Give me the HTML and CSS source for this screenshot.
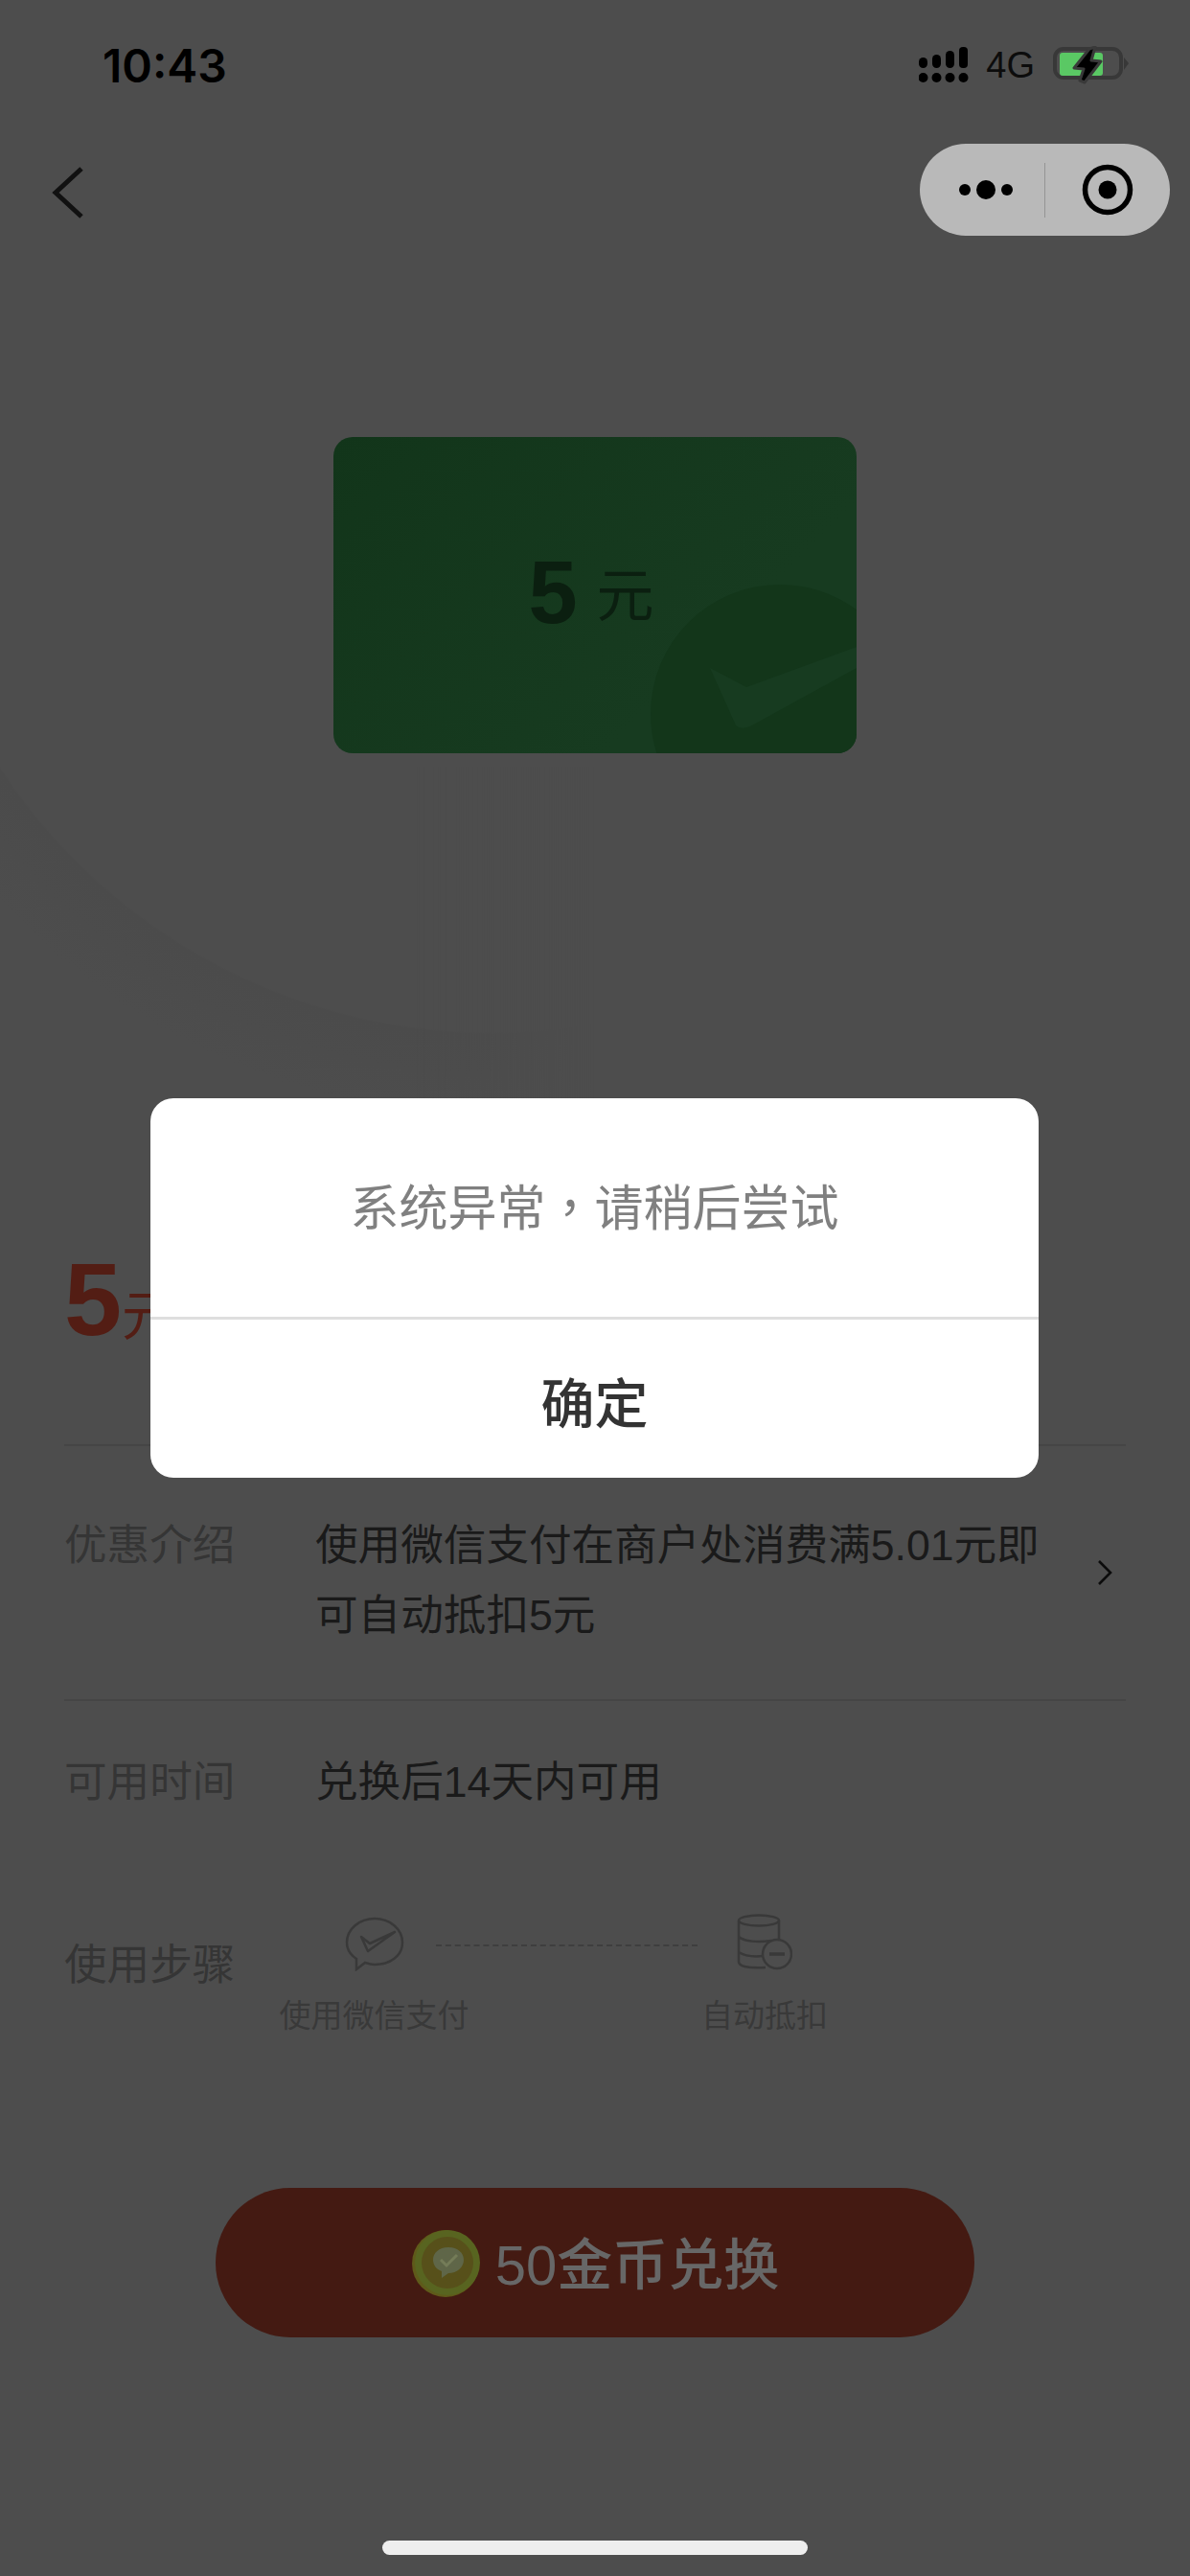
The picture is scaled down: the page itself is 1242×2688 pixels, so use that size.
FILE: index.html
```html
<!DOCTYPE html>
<html lang="zh-CN">
<head>
    <meta charset="UTF-8">
    <meta name="viewport" content="width=device-width, initial-scale=1.0">
    <title>5元代金券</title>
    <link rel="stylesheet" href="styles.css">
</head>
<body>
    <div class="page">
        <div class="status-bar">
            <span class="time">10:43</span>
            <div class="status-icons">
                <svg class="signal" width="52" height="38" viewBox="0 0 52 38">
                    <rect x="0" y="11" width="9" height="11" rx="4.5"/>
                    <rect x="14" y="8" width="9" height="14" rx="4.5"/>
                    <rect x="28" y="4" width="9" height="18" rx="4.5"/>
                    <rect x="42" y="0" width="9" height="22" rx="4"/>
                    <circle cx="4.5" cy="32" r="5"/>
                    <circle cx="18.5" cy="32" r="5"/>
                    <circle cx="32.5" cy="32" r="5"/>
                    <circle cx="46.5" cy="32" r="5"/>
                </svg>
                <span class="network">4G</span>
                <svg class="battery" width="80" height="40" viewBox="0 0 80 40">
                    <rect x="2" y="3" width="69" height="30" rx="9" fill="none" stroke="#383838" stroke-width="4"/>
                    <rect x="7" y="7" width="45" height="24" rx="3" fill="#5ac864"/>
                    <path d="M74 12 L79 18 L74 25 Z" fill="#383838"/>
                    <path d="M38 3 L44 1 L40 15 L50 16 L33 38 L28 36 L32 24 L22 23 Z" fill="#000" stroke="#393939" stroke-width="3" stroke-linejoin="round"/>
                </svg>
            </div>
        </div>

        <div class="nav-bar">
            <svg class="back" width="34" height="56" viewBox="0 0 34 56">
                <path d="M31 3 L4 28 L31 53" fill="none" stroke="#111" stroke-width="5"/>
            </svg>
            <div class="capsule">
                <div class="capsule-part">
                    <svg class="capsule-dots" width="58" height="24" viewBox="0 0 58 24">
                        <circle cx="7" cy="12" r="6"/>
                        <circle cx="29" cy="12" r="10"/>
                        <circle cx="51" cy="12" r="6"/>
                    </svg>
                </div>
                <div class="capsule-line"></div>
                <div class="capsule-part">
                    <svg width="54" height="54" viewBox="0 0 54 54">
                        <circle cx="27" cy="27" r="23.5" fill="none" stroke="#000" stroke-width="5.5"/>
                        <circle cx="27" cy="27" r="9.5"/>
                    </svg>
                </div>
            </div>
        </div>

        <div class="coupon-card">
            <svg class="coupon-mark" width="546" height="330" viewBox="0 0 546 330">
                <circle cx="466" cy="289" r="135" fill="#13361a"/>
                <path d="M393 241 L431 261 L546 219 L546 241 L435 302 Q425 306 420 301 Z" fill="#173b20"/>
            </svg>
            <div class="coupon-value"><span class="coupon-num">5</span><span class="coupon-unit">元</span></div>
        </div>

        <div class="amount"><span class="amount-num">5</span><span class="amount-unit">元</span></div>

        <div class="info-row first-row">
            <div class="info-label">优惠介绍</div>
            <div class="info-value">使用微信支付在商户处消费满5.01元即可自动抵扣5元</div>
            <svg class="info-arrow" width="16" height="26" viewBox="0 0 16 26">
                <path d="M2 1 L14 13 L2 25" fill="none" stroke="#0c0c0c" stroke-width="2.6"/>
            </svg>
        </div>
        <div class="info-row time-row">
            <div class="info-label">可用时间</div>
            <div class="info-value">兑换后14天内可用</div>
        </div>
        <div class="steps-row">
            <div class="info-label steps-label">使用步骤</div>
            <div class="step step-pay">
                <svg width="62" height="60" viewBox="0 0 62 60">
                    <path d="M31 5 C47 5 60 16 60 30 C60 44 47 53 31 53 C27 53 24 52 21 51 L12 58 L12 47 C6 43 2 37 2 30 C2 16 15 5 31 5 Z" fill="none" stroke="#393939" stroke-width="2.5"/>
                    <path d="M17 24 L24 39 L52 19 L26 31 L17 24 Z" fill="none" stroke="#393939" stroke-width="2.5" stroke-linejoin="round"/>
                </svg>
                <div class="step-text">使用微信支付</div>
            </div>
            <div class="step-line"></div>
            <div class="step step-auto">
                <svg width="58" height="60" viewBox="0 0 58 60">
                    <ellipse cx="23" cy="7" rx="21" ry="5.5" fill="none" stroke="#393939" stroke-width="2.5"/>
                    <path d="M2 7 V50 C2 55 12 57 30 56 M44 7 V27 M2 24 C8 29 22 30 36 28 M2 40 C8 44 18 45 28 44" fill="none" stroke="#393939" stroke-width="2.5"/>
                    <circle cx="42" cy="42" r="15" fill="#4d4d4d" stroke="#393939" stroke-width="2.5"/>
                    <path d="M34 42 H50" stroke="#393939" stroke-width="3.5"/>
                </svg>
                <div class="step-text">自动抵扣</div>
            </div>
        </div>

        <div class="exchange-btn">
            <svg width="74" height="72" viewBox="0 0 74 72">
                <circle cx="36" cy="37" r="35" fill="#5f5a1a"/>
                <circle cx="38" cy="36" r="34" fill="#586420"/>
                <circle cx="38" cy="36" r="27" fill="#57501a"/>
                <path d="M39 20 C49 20 55 26 55 33 C55 41 48 47 39 47 L32 52 L32 45 C26 43 23 38 23 33 C23 26 29 20 39 20 Z" fill="#5f6648"/>
                <path d="M31 33 L37 39 L48 28" fill="none" stroke="#747c58" stroke-width="3"/>
            </svg>
            <span class="exchange-text">50金币兑换</span>
        </div>

        <div class="home-bar"></div>

        <div class="dialog">
            <div class="dialog-msg">系统异常<span class="comma">，</span>请稍后尝试</div>
            <div class="dialog-btn">确定</div>
        </div>
    </div>
</body>
</html>
```

FILE: styles.css
```css
body {
    margin: 0;
    padding: 0;
    background-color: #4d4d4d;
    font-family: "Liberation Sans", "Noto Sans CJK SC", sans-serif;
}
.page {
    position: relative;
    width: 1242px;
    height: 2688px;
    overflow: hidden;
    background-color: #4d4d4d;
}
/* faint arc behind the page, lower left only */
.page::before {
    content: "";
    position: absolute;
    left: 0;
    top: 800px;
    width: 620px;
    height: 400px;
    background: radial-gradient(circle at 513px -336px, #4d4d4d 613px, #4b4b4b 615px, #4d4d4d 700px);
    -webkit-mask-image: linear-gradient(to right, #000 70%, transparent);
    mask-image: linear-gradient(to right, #000 70%, transparent);
}

/* status bar */
.status-bar {
    display: flex;
    justify-content: space-between;
    align-items: center;
    height: 136px;
    padding: 0 63px 0 107px;
}
.time {
    font-family: Inter, sans-serif;
    font-size: 48px;
    font-weight: 600;
    color: #000;
}
.status-icons {
    display: flex;
    align-items: center;
}
.signal {
    fill: #000;
}
.network {
    margin-left: 18px;
    margin-right: 19px;
    font-size: 38px;
    color: #0c0c0c;
}

/* nav */
.nav-bar {
    display: flex;
    justify-content: space-between;
    align-items: center;
    height: 96px;
    margin-top: 14px;
    padding: 0 21px 0 54px;
}
.back {
    margin-top: 6px;
}
.capsule {
    display: flex;
    align-items: center;
    width: 261px;
    height: 96px;
    border-radius: 48px;
    background-color: #b9b9b9;
}
.capsule-part {
    display: flex;
    justify-content: center;
    align-items: center;
    flex: 1;
}
.capsule-dots {
    margin-left: 8px;
}
.capsule-line {
    width: 1px;
    height: 57px;
    background-color: #949494;
}

/* coupon card */
.coupon-card {
    position: relative;
    display: flex;
    justify-content: center;
    align-items: center;
    width: 546px;
    height: 330px;
    margin: 210px auto 0;
    border-radius: 20px;
    overflow: hidden;
    background: linear-gradient(135deg, #12351a, #173b20 70%);
}
.coupon-mark {
    position: absolute;
    left: 0;
    top: 0;
}
.coupon-value {
    position: relative;
    display: flex;
    align-items: center;
    margin-right: 8px;
    margin-top: -6px;
    color: #0b1f10;
}
.coupon-num {
    font-size: 92px;
    font-weight: 700;
    line-height: 100px;
}
.coupon-unit {
    margin-left: 20px;
    padding-top: 10px;
    font-size: 60px;
    line-height: 100px;
}

/* amount */
.amount {
    display: flex;
    align-items: baseline;
    height: 108px;
    margin: 516px 67px 0;
    padding-bottom: 97px;
    border-bottom: 2px solid #454545;
    color: #531d14;
}
.amount-num {
    font-size: 108px;
    font-weight: 700;
    line-height: 108px;
}
.amount-unit {
    font-size: 56px;
    line-height: 108px;
}

/* info rows */
.info-row {
    display: flex;
    margin: 0 67px;
    font-size: 44.6px;
    line-height: 73px;
}
.info-label {
    flex: none;
    width: 262px;
    color: #353535;
}
.info-value {
    width: 770px;
    color: #1a1a1a;
}
.first-row {
    padding: 67px 0 51px;
    border-bottom: 2px solid #454545;
}
.info-arrow {
    align-self: center;
    margin-bottom: 16px;
    margin-left: 46px;
}
.time-row {
    padding-top: 48px;
    padding-bottom: 118px;
}
.steps-row {
    display: flex;
    height: 125px;
    margin: 0 67px;
    margin-top: -14px;
    font-size: 44.6px;
    line-height: 73px;
}
.steps-label {
    width: 225px;
    padding-top: 14px;
}
.step {
    display: flex;
    flex-direction: column;
    align-items: center;
    flex: none;
}
.step svg {
    display: block;
    margin-top: -3px;
}
.step-pay {
    width: 197px;
}
.step-auto {
    width: 126px;
    margin-left: 7px;
}
.step-text {
    margin-top: 27px;
    font-size: 33px;
    line-height: 40px;
    white-space: nowrap;
    color: #393939;
}
.step-line {
    flex: none;
    width: 273px;
    height: 0;
    margin: 29px 0 0 -34px;
    border-top: 2px dashed #3e3e3e;
}

/* exchange button */
.exchange-btn {
    display: flex;
    justify-content: center;
    align-items: center;
    gap: 14px;
    width: 792px;
    height: 156px;
    margin: 158px auto 0;
    border-radius: 78px;
    background-color: #441a12;
}
.exchange-text {
    margin-bottom: 4px;
    font-size: 58px;
    font-weight: 500;
    color: #676767;
}

.home-bar {
    width: 444px;
    height: 15px;
    margin: 212px auto 0;
    border-radius: 8px;
    background-color: #eee;
}

/* dialog sits over the page */
.dialog {
    position: absolute;
    left: 157px;
    top: 1146px;
    width: 927px;
    height: 396px;
    border-radius: 24px;
    background-color: #fff;
}
.dialog-msg {
    display: flex;
    justify-content: center;
    align-items: center;
    height: 222px;
    padding-bottom: 6px;
    border-bottom: 3px solid #dedede;
    font-size: 51px;
    color: #808080;
}
.comma {
    font-family: "Noto Sans CJK TC", sans-serif;
}
.dialog-btn {
    padding-top: 51px;
    text-align: center;
    font-size: 56px;
    font-weight: 500;
    line-height: 76px;
    color: #333;
}
```
